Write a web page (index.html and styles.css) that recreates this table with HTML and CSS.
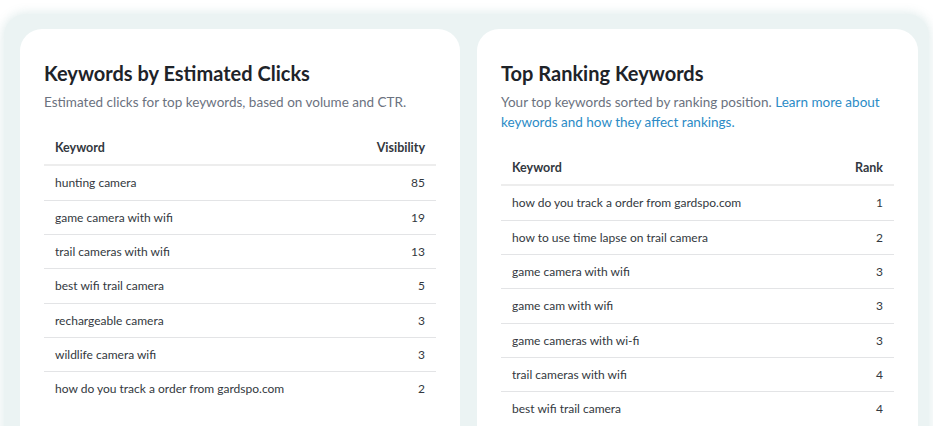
FILE: index.html
```html
<!DOCTYPE html>
<html lang="en">
<head>
<meta charset="utf-8">
<title>Keywords</title>
<link rel="stylesheet" href="styles.css">
</head>
<body>
<div class="panel">
  <section class="card">
    <h2 class="card-title">Keywords by Estimated Clicks</h2>
    <p class="card-sub">Estimated clicks for top keywords, based on volume and CTR.</p>
    <table class="kw-table">
      <thead>
        <tr><th>Keyword</th><th class="num">Visibility</th></tr>
      </thead>
      <tbody>
        <tr><td>hunting camera</td><td class="num">85</td></tr>
        <tr><td>game camera with wifi</td><td class="num">19</td></tr>
        <tr><td>trail cameras with wifi</td><td class="num">13</td></tr>
        <tr><td>best wifi trail camera</td><td class="num">5</td></tr>
        <tr><td>rechargeable camera</td><td class="num">3</td></tr>
        <tr><td>wildlife camera wifi</td><td class="num">3</td></tr>
        <tr><td>how do you track a order from gardspo.com</td><td class="num">2</td></tr>
      </tbody>
    </table>
  </section>
  <section class="card">
    <h2 class="card-title">Top Ranking Keywords</h2>
    <p class="card-sub">Your top keywords sorted by ranking position. <a href="#" class="link">Learn more about keywords and how they affect rankings.</a></p>
    <table class="kw-table">
      <thead>
        <tr><th>Keyword</th><th class="num">Rank</th></tr>
      </thead>
      <tbody>
        <tr><td>how do you track a order from gardspo.com</td><td class="num">1</td></tr>
        <tr><td>how to use time lapse on trail camera</td><td class="num">2</td></tr>
        <tr><td>game camera with wifi</td><td class="num">3</td></tr>
        <tr><td>game cam with wifi</td><td class="num">3</td></tr>
        <tr><td>game cameras with wi-fi</td><td class="num">3</td></tr>
        <tr><td>trail cameras with wifi</td><td class="num">4</td></tr>
        <tr><td>best wifi trail camera</td><td class="num">4</td></tr>
      </tbody>
    </table>
  </section>
</div>
</body>
</html>
```
FILE: styles.css
```css
html, body {
  margin: 0;
  padding: 0;
  background: #ffffff;
  font-family: Lato, "Open Sans", sans-serif;
  overflow: hidden;
}

.panel {
  margin: 14px 4px 0 4px;
  padding: 15px 11px 40px 16px;
  background: #ebf3f3;
  border-radius: 22px;
  box-shadow: 0 0 10px 2px rgba(225, 236, 236, 0.9);
  display: grid;
  grid-template-columns: 440px 441px;
  column-gap: 17px;
  height: 500px;
  box-sizing: border-box;
}

.card {
  background: #ffffff;
  border-radius: 22px;
  padding: 32px 24px 24px 24px;
}

.card-title {
  margin: 0;
  font-size: 20px;
  line-height: 24px;
  font-weight: 700;
  color: #1e2329;
}

.card-sub {
  margin: 7px 0 0 0;
  font-size: 13.5px;
  line-height: 20px;
  color: #6b7280;
}

.link {
  color: #2b8bc6;
  text-decoration: none;
}

.kw-table {
  margin-top: 19px;
  width: 100%;
  border-collapse: collapse;
  font-size: 12px;
  line-height: 17.33px;
  color: #333840;
}

.kw-table th {
  text-align: left;
  font-weight: 700;
  font-size: 12.5px;
  padding: 8px 11px;
  border-bottom: 2px solid #ededed;
}

.kw-table td {
  padding: 8px 11px;
  border-bottom: 1px solid #e3e4e6;
}

.kw-table tbody tr:last-child td {
  border-bottom: none;
}

.kw-table .num {
  text-align: right;
}
```
